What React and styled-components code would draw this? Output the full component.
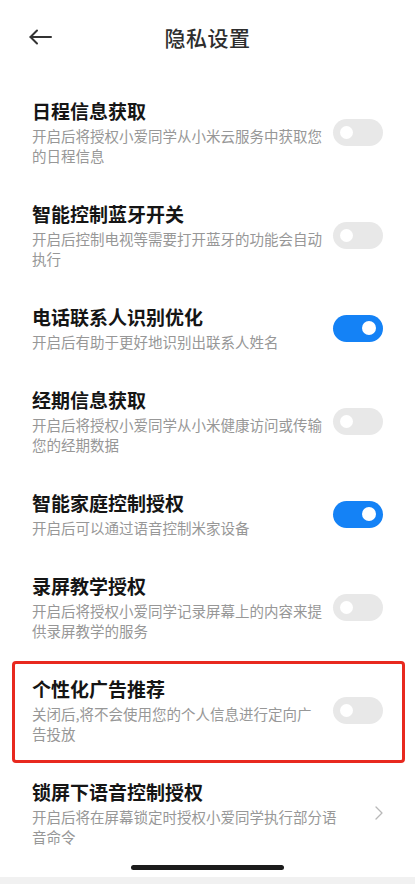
import React from "react";
import styled, { createGlobalStyle } from "styled-components";

const GlobalStyle = createGlobalStyle`
  html, body { margin: 0; padding: 0; background: #ffffff; }
  body { font-family: "Noto Sans CJK SC", "Noto Sans", sans-serif; -webkit-font-smoothing: antialiased; }
  * { box-sizing: border-box; }
`;

const Page = styled.div`
  position: relative;
  width: 415px;
  height: 884px;
  overflow: hidden;
  background: #ffffff;
  display: flex;
  flex-direction: column;
`;

const Header = styled.header`
  height: 73px;
  display: grid;
  grid-template-columns: 1fr auto 1fr;
  align-items: center;
`;

const BackButton = styled.button`
  justify-self: start;
  margin-left: 28px;
  padding: 0;
  border: none;
  background: none;
  display: flex;
  align-items: center;
  cursor: pointer;
`;

const Title = styled.h1`
  margin: 0;
  font-size: 21px;
  font-weight: 500;
  color: #2e2e2e;
  letter-spacing: 0.5px;
  line-height: 28px;
`;

const List = styled.div`
  padding-top: 8px;
  display: flex;
  flex-direction: column;
`;

const Row = styled.div`
  position: relative;
  display: flex;
  align-items: center;
  padding: 17px 32px 18px 32px;
`;

const TextBlock = styled.div`
  flex: 1;
  min-width: 0;
  padding-right: ${(p) => (p.$wide ? "33px" : "9px")};
`;

const ItemTitle = styled.div`
  font-size: 19px;
  font-weight: 700;
  color: #151515;
  line-height: 26px;
`;

const ItemDesc = styled.div`
  margin-top: 2px;
  font-size: 14.5px;
  color: #979797;
  line-height: 20px;
`;

const Track = styled.div`
  position: relative;
  flex: none;
  width: 50px;
  height: 27px;
  border-radius: 14px;
  background: ${(p) => (p.$on ? "#1482f6" : "#e8e8e8")};
`;

const Knob = styled.span`
  position: absolute;
  top: 50%;
  width: ${(p) => (p.$on ? "14px" : "13px")};
  height: ${(p) => (p.$on ? "14px" : "13px")};
  margin-top: ${(p) => (p.$on ? "-7px" : "-6.5px")};
  border-radius: 50%;
  background: #ffffff;
  ${(p) => (p.$on ? "right: 7px;" : "left: 7px;")}
`;

const Chevron = styled.svg`
  flex: none;
  width: 8px;
  height: 14px;
`;

const Highlight = styled.div`
  position: absolute;
  left: 12px;
  right: 10px;
  top: 2px;
  bottom: -1px;
  border: 3px solid #e8291f;
  border-radius: 4px;
  pointer-events: none;
`;

const HomeArea = styled.div`
  position: absolute;
  left: 0;
  right: 0;
  bottom: 0;
  height: 19px;
  display: flex;
  flex-direction: column;
  align-items: center;
`;

const HomeIndicator = styled.div`
  width: 153px;
  height: 5px;
  border-radius: 3px;
  background: #1c1c1c;
`;

const BottomBand = styled.div`
  margin-top: auto;
  align-self: stretch;
  height: 7px;
  background: #f1f1f1;
`;

function Toggle({ on }) {
  return (
    <Track $on={on}>
      <Knob $on={on} />
    </Track>
  );
}

const items = [
  { title: "日程信息获取", desc: "开启后将授权小爱同学从小米云服务中获取您的日程信息", on: false },
  { title: "智能控制蓝牙开关", desc: "开启后控制电视等需要打开蓝牙的功能会自动执行", on: false },
  { title: "电话联系人识别优化", desc: "开启后有助于更好地识别出联系人姓名", on: true },
  { title: "经期信息获取", desc: "开启后将授权小爱同学从小米健康访问或传输您的经期数据", on: false },
  { title: "智能家庭控制授权", desc: "开启后可以通过语音控制米家设备", on: true },
  { title: "录屏教学授权", desc: "开启后将授权小爱同学记录屏幕上的内容来提供录屏教学的服务", on: false },
  { title: "个性化广告推荐", desc: "关闭后,将不会使用您的个人信息进行定向广告投放", on: false, highlight: true },
  { title: "锁屏下语音控制授权", desc: "开启后将在屏幕锁定时授权小爱同学执行部分语音命令", link: true },
];

export default function App() {
  return (
    <>
      <GlobalStyle />
      <Page>
        <Header>
          <BackButton aria-label="返回">
            <svg width="24" height="16" viewBox="0 0 24 16" fill="none">
              <path d="M2.5 8H23" stroke="#333" strokeWidth="2" strokeLinecap="round" />
              <path d="M9 1.5L2.5 8L9 14.5" stroke="#333" strokeWidth="2" strokeLinecap="round" strokeLinejoin="round" />
            </svg>
          </BackButton>
          <Title>隐私设置</Title>
          <span />
        </Header>
        <List>
          {items.map((it) => (
            <Row key={it.title}>
              <TextBlock $wide={it.link}>
                <ItemTitle>{it.title}</ItemTitle>
                <ItemDesc>{it.desc}</ItemDesc>
              </TextBlock>
              {it.link ? (
                <Chevron viewBox="0 0 8 14" fill="none">
                  <path d="M1 1L7 7L1 13" stroke="#b8b8b8" strokeWidth="1.3" strokeLinecap="round" strokeLinejoin="round" />
                </Chevron>
              ) : (
                <Toggle on={it.on} />
              )}
              {it.highlight && <Highlight />}
            </Row>
          ))}
        </List>
        <HomeArea>
          <HomeIndicator />
          <BottomBand />
        </HomeArea>
      </Page>
    </>
  );
}
